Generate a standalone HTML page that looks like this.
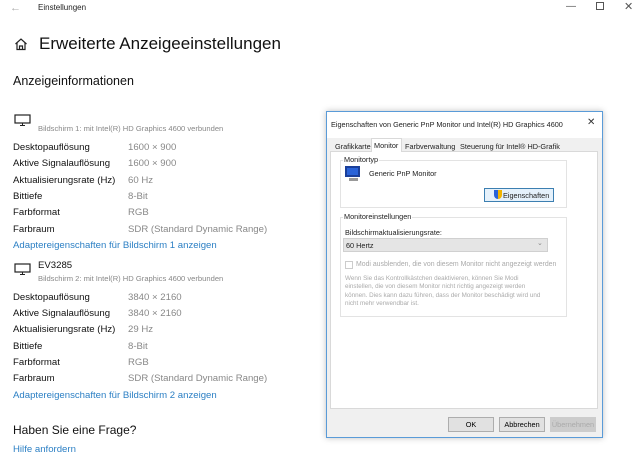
<!DOCTYPE html>
<html><head><meta charset="utf-8"><style>
*{margin:0;padding:0;box-sizing:border-box}
body{width:640px;height:469px;background:#fff;font-family:"Liberation Sans",sans-serif;color:#000;position:relative;overflow:hidden}
.a{position:absolute;white-space:nowrap}
.l{font-size:9.6px;color:#111}
.v{font-size:9.6px;color:#888}
.lk{font-size:9.6px;color:#2b7fc4}
.s{font-size:7.6px;color:#888}
.d{font-size:7.3px;color:#222}
.g{color:#aaa}
.btn{position:absolute;border:1px solid #adadad;background:#e1e1e1;font-size:7.3px;text-align:center;line-height:13px}
</style></head><body>
<div class="a" style="left:10px;top:2px;font-size:11px;color:#aaa">←</div>
<div class="a" style="left:38px;top:3px;font-size:8px;color:#222">Einstellungen</div>
<div class="a" style="left:566px;top:1px;font-size:10px;color:#555">—</div>
<div class="a" style="left:596px;top:2px;width:8px;height:8px;border:1px solid #555"></div>
<div class="a" style="left:624px;top:0px;font-size:11px;color:#555">✕</div>
<svg class="a" style="left:14px;top:37px" width="14" height="14" viewBox="0 0 14 14"><path d="M1.5 7 L7 2 L12.5 7 M3 5.8 V12.5 H11 V5.8 M5.5 12.5 V9 H8.5 V12.5" fill="none" stroke="#222" stroke-width="1.2"/></svg>
<div class="a" style="left:39px;top:34px;font-size:17px;color:#111">Erweiterte Anzeigeeinstellungen</div>
<div class="a" style="left:13px;top:74px;font-size:12.5px;color:#111">Anzeigeinformationen</div>
<svg class="a" style="left:14px;top:114px" width="17" height="12" viewBox="0 0 17 12"><rect x="1" y="1" width="15" height="8" fill="none" stroke="#222" stroke-width="1.2"/><path d="M6 11.5H11M8.5 9V11.5" stroke="#222"/></svg>
<div class="a s" style="left:38px;top:124px">Bildschirm 1: mit Intel(R) HD Graphics 4600 verbunden</div>
<div class="a l" style="left:13px;top:142px">Desktopauflösung</div><div class="a v" style="left:128px;top:142px">1600 × 900</div>
<div class="a l" style="left:13px;top:158px">Aktive Signalauflösung</div><div class="a v" style="left:128px;top:158px">1600 × 900</div>
<div class="a l" style="left:13px;top:175px">Aktualisierungsrate (Hz)</div><div class="a v" style="left:128px;top:175px">60 Hz</div>
<div class="a l" style="left:13px;top:191px">Bittiefe</div><div class="a v" style="left:128px;top:191px">8-Bit</div>
<div class="a l" style="left:13px;top:207px">Farbformat</div><div class="a v" style="left:128px;top:207px">RGB</div>
<div class="a l" style="left:13px;top:224px">Farbraum</div><div class="a v" style="left:128px;top:224px">SDR (Standard Dynamic Range)</div>
<div class="a lk" style="left:13px;top:240px">Adaptereigenschaften für Bildschirm 1 anzeigen</div>
<svg class="a" style="left:14px;top:263px" width="17" height="12" viewBox="0 0 17 12"><rect x="1" y="1" width="15" height="8" fill="none" stroke="#222" stroke-width="1.2"/><path d="M6 11.5H11M8.5 9V11.5" stroke="#222"/></svg>
<div class="a l" style="left:38px;top:260px">EV3285</div>
<div class="a s" style="left:38px;top:274px">Bildschirm 2: mit Intel(R) HD Graphics 4600 verbunden</div>
<div class="a l" style="left:13px;top:292px">Desktopauflösung</div><div class="a v" style="left:128px;top:292px">3840 × 2160</div>
<div class="a l" style="left:13px;top:308px">Aktive Signalauflösung</div><div class="a v" style="left:128px;top:308px">3840 × 2160</div>
<div class="a l" style="left:13px;top:324px">Aktualisierungsrate (Hz)</div><div class="a v" style="left:128px;top:324px">29 Hz</div>
<div class="a l" style="left:13px;top:341px">Bittiefe</div><div class="a v" style="left:128px;top:341px">8-Bit</div>
<div class="a l" style="left:13px;top:357px">Farbformat</div><div class="a v" style="left:128px;top:357px">RGB</div>
<div class="a l" style="left:13px;top:373px">Farbraum</div><div class="a v" style="left:128px;top:373px">SDR (Standard Dynamic Range)</div>
<div class="a lk" style="left:13px;top:390px">Adaptereigenschaften für Bildschirm 2 anzeigen</div>
<div class="a" style="left:13px;top:423px;font-size:12px;color:#111">Haben Sie eine Frage?</div>
<div class="a lk" style="left:13px;top:444px">Hilfe anfordern</div>

<div class="a" style="left:326px;top:111px;width:277px;height:327px;border:1px solid #5a9bd8;background:#f0f0f0;box-shadow:0 0 6px rgba(0,0,0,.25)"></div>
<div class="a" style="left:327px;top:112px;width:275px;height:26px;background:#fff"></div>
<div class="a d" style="left:331px;top:120px">Eigenschaften von Generic PnP Monitor und Intel(R) HD Graphics 4600</div>
<div class="a" style="left:587px;top:117px;font-size:10px;color:#333">✕</div>
<div class="a" style="left:330px;top:151px;width:268px;height:258px;background:#fff;border:1px solid #d9d9d9"></div>
<div class="a d" style="left:335px;top:142px">Grafikkarte</div>
<div class="a" style="left:371px;top:138px;width:31px;height:14px;background:#fff;border:1px solid #d9d9d9;border-bottom:none"></div>
<div class="a d" style="left:374px;top:141px">Monitor</div>
<div class="a d" style="left:405px;top:142px">Farbverwaltung</div>
<div class="a d" style="left:460px;top:142px">Steuerung für Intel® HD-Grafik</div>
<div class="a" style="left:340px;top:160px;width:227px;height:48px;border:1px solid #e3e3e3"></div>
<div class="a d" style="left:343px;top:155px;background:#fff;padding:0 1px">Monitortyp</div>
<svg class="a" style="left:344px;top:166px" width="18" height="16" viewBox="0 0 18 16"><rect x="1" y="0" width="15" height="11" fill="#1a3f9a"/><rect x="3" y="2" width="11" height="7" fill="#2a63d8"/><rect x="5" y="12" width="9" height="3" fill="#999"/></svg>
<div class="a d" style="left:369px;top:169px">Generic PnP Monitor</div>
<div class="a" style="left:484px;top:188px;width:70px;height:14px;border:1px solid #3c7fb1;background:#e5f1fb"></div>
<div class="a" style="left:494px;top:190px;width:8px;height:9px;background:linear-gradient(90deg,#2a63d8 50%,#f2b400 50%);border-radius:0 0 4px 4px"></div>
<div class="a d" style="left:503px;top:191px">Eigenschaften</div>
<div class="a" style="left:340px;top:217px;width:227px;height:100px;border:1px solid #e3e3e3"></div>
<div class="a d" style="left:343px;top:212px;background:#fff;padding:0 1px">Monitoreinstellungen</div>
<div class="a d" style="left:345px;top:228px">Bildschirmaktualisierungsrate:</div>
<div class="a" style="left:343px;top:238px;width:205px;height:14px;background:#e5e5e5;border:1px solid #d0d0d0"></div>
<div class="a d" style="left:346px;top:241px">60 Hertz</div>
<div class="a" style="left:537px;top:239px;font-size:7px;color:#888">⌄</div>
<div class="a" style="left:345px;top:261px;width:8px;height:8px;border:1px solid #ccc"></div>
<div class="a g" style="left:356px;top:261px;font-size:6.9px">Modi ausblenden, die von diesem Monitor nicht angezeigt werden</div>
<div class="a g" style="left:345px;top:275px;font-size:6.3px;line-height:8.3px;color:#aaa">Wenn Sie das Kontrollkästchen deaktivieren, können Sie Modi<br>einstellen, die von diesem Monitor nicht richtig angezeigt werden<br>können. Dies kann dazu führen, dass der Monitor beschädigt wird und<br>nicht mehr verwendbar ist.</div>
<div class="btn" style="left:448px;top:417px;width:46px;height:15px">OK</div>
<div class="btn" style="left:499px;top:417px;width:46px;height:15px">Abbrechen</div>
<div class="btn" style="left:550px;top:417px;width:46px;height:15px;color:#aaa;border-color:#ccc;background:#ccc">Übernehmen</div>
</body></html>
